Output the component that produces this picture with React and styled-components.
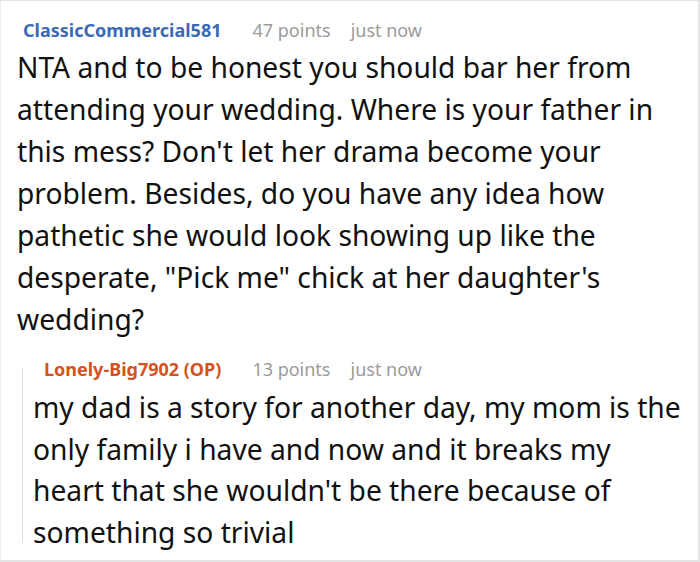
import React from "react";
import styled, { createGlobalStyle } from "styled-components";

const Global = createGlobalStyle`
  html, body { margin: 0; padding: 0; background: #fff; }
  body { font-family: "Noto Sans", "Open Sans", sans-serif; }
`;

const Frame = styled.div`
  box-sizing: border-box;
  width: 700px;
  height: 562px;
  border-top: 1px solid #e4e4e4;
  border-left: 1px solid #ececec;
  border-right: 2px solid #e4e4e4;
  border-bottom: 2px solid #e4e4e4;
  padding: 15px 10px 0 16px;
  overflow: hidden;
`;

const Header = styled.div`
  display: flex;
  align-items: baseline;
  padding-left: ${(p) => p.$indent}px;
  height: 28px;
  line-height: 28px;
  white-space: nowrap;
`;

const User = styled.span`
  font-weight: 700;
  font-size: 18px;
  color: ${(p) => p.$color};
  margin-right: 31px;
`;

const Meta = styled.span`
  font-size: 18px;
  color: #9b9b9b;
  margin-right: 20px;
`;

const Body = styled.p`
  margin: ${(p) => p.$top}px 0 0;
  font-size: 28.2px;
  line-height: ${(p) => p.$lh}px;
  color: #111;
  padding-left: ${(p) => p.$indent}px;
`;

const Reply = styled.div`
  position: relative;
  margin-top: 15px;
  margin-left: 5px;
  padding-left: 11px;

  &::before {
    content: "";
    position: absolute;
    left: 0;
    top: 13px;
    bottom: 10px;
    width: 1px;
    background: #dedede;
  }
`;

export default function App() {
  return (
    <>
      <Global />
      <Frame>
        <Header $indent={6}>
          <User $color="#3a6ab4">ClassicCommercial581</User>
          <Meta>47 points</Meta>
          <Meta>just now</Meta>
        </Header>
        <Body $top={2} $lh={42}>
          NTA and to be honest you should bar her from attending your wedding. Where is your father in this mess? Don't let her drama become your problem. Besides, do you have any idea how pathetic she would look showing up like the desperate, "Pick me" chick at her daughter's wedding?
        </Body>
        <Reply>
          <Header $indent={11}>
            <User $color="#d4521f">Lonely-Big7902 (OP)</User>
            <Meta>13 points</Meta>
            <Meta>just now</Meta>
          </Header>
          <Body $top={4} $lh={41.5}>
            my dad is a story for another day, my mom is the only family i have and now and it breaks my heart that she wouldn't be there because of something so trivial
          </Body>
        </Reply>
      </Frame>
    </>
  );
}
